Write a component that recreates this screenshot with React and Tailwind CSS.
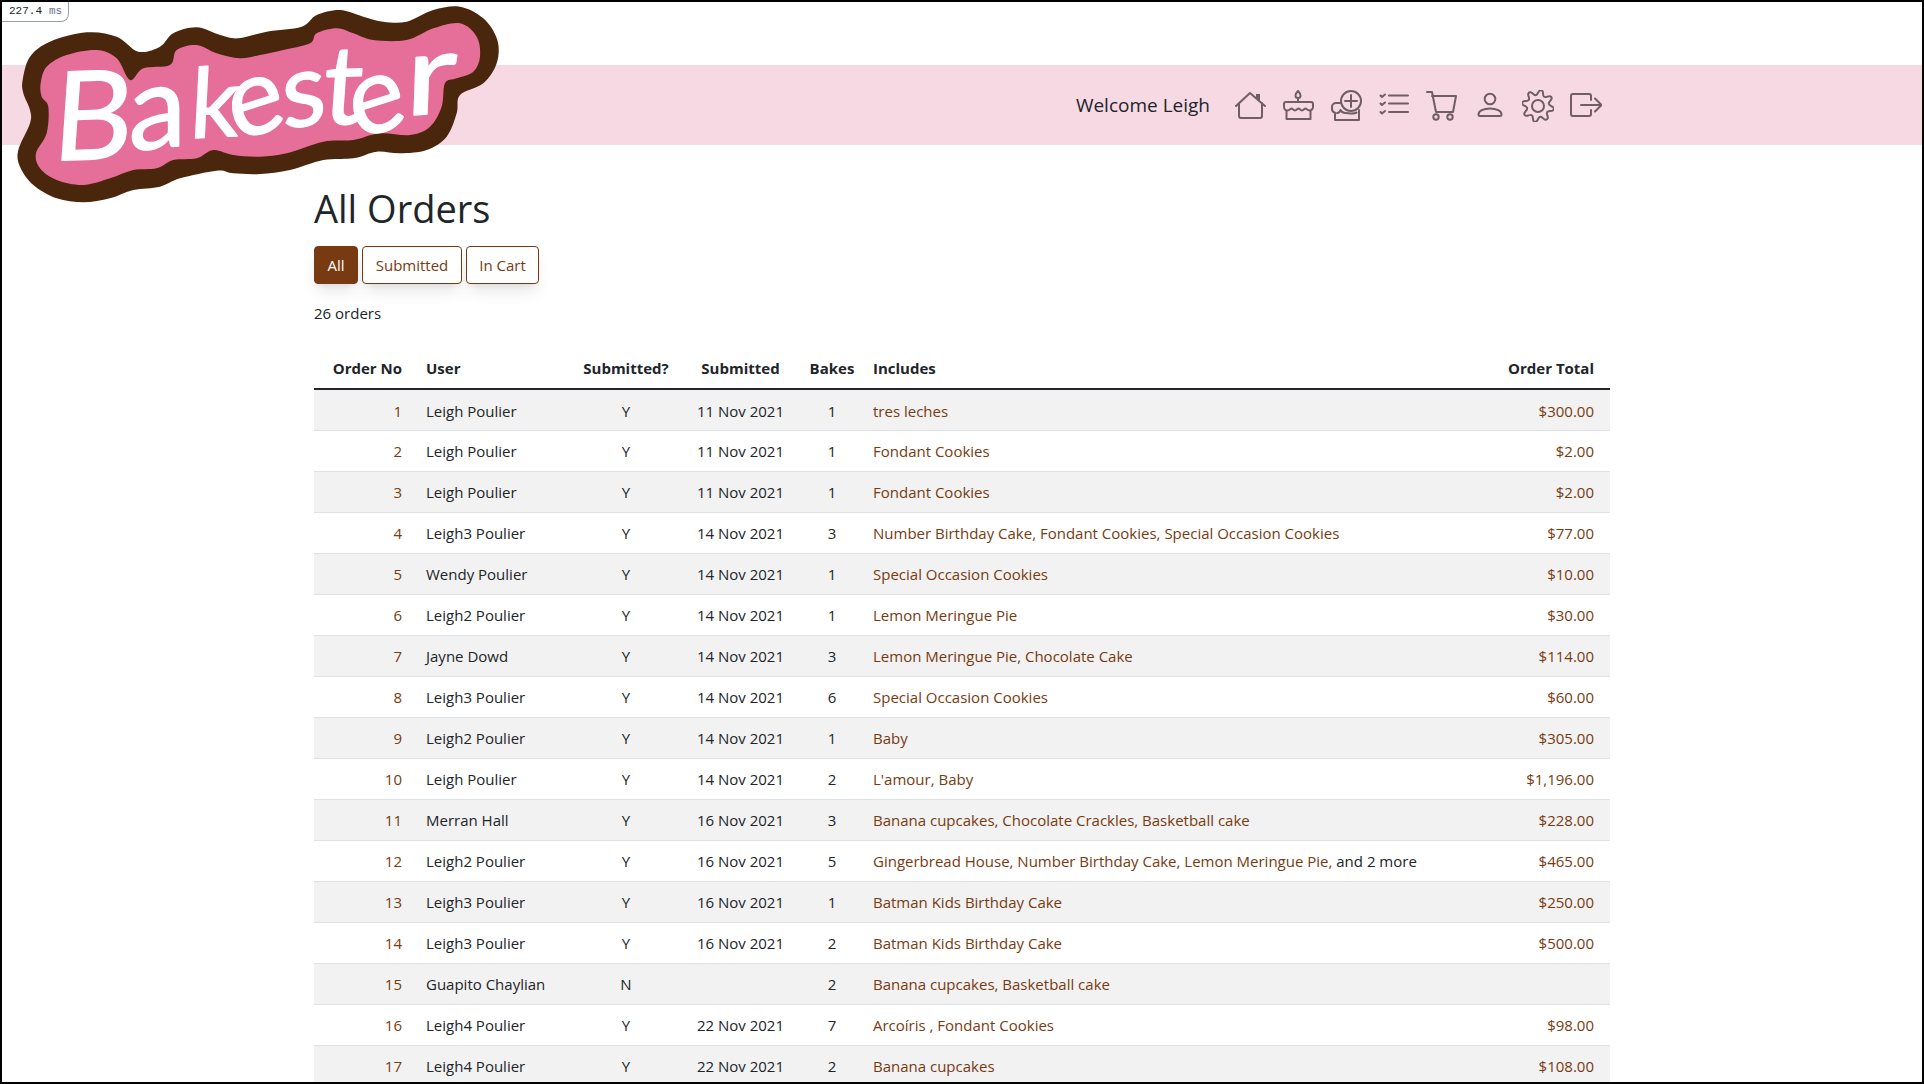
import React from "react";

const orders = [
  [1, "Leigh Poulier", "Y", "11 Nov 2021", 1, "tres leches", "$300.00"],
  [2, "Leigh Poulier", "Y", "11 Nov 2021", 1, "Fondant Cookies", "$2.00"],
  [3, "Leigh Poulier", "Y", "11 Nov 2021", 1, "Fondant Cookies", "$2.00"],
  [4, "Leigh3 Poulier", "Y", "14 Nov 2021", 3, "Number Birthday Cake, Fondant Cookies, Special Occasion Cookies", "$77.00"],
  [5, "Wendy Poulier", "Y", "14 Nov 2021", 1, "Special Occasion Cookies", "$10.00"],
  [6, "Leigh2 Poulier", "Y", "14 Nov 2021", 1, "Lemon Meringue Pie", "$30.00"],
  [7, "Jayne Dowd", "Y", "14 Nov 2021", 3, "Lemon Meringue Pie, Chocolate Cake", "$114.00"],
  [8, "Leigh3 Poulier", "Y", "14 Nov 2021", 6, "Special Occasion Cookies", "$60.00"],
  [9, "Leigh2 Poulier", "Y", "14 Nov 2021", 1, "Baby", "$305.00"],
  [10, "Leigh Poulier", "Y", "14 Nov 2021", 2, "L'amour, Baby", "$1,196.00"],
  [11, "Merran Hall", "Y", "16 Nov 2021", 3, "Banana cupcakes, Chocolate Crackles, Basketball cake", "$228.00"],
  [12, "Leigh2 Poulier", "Y", "16 Nov 2021", 5, "Gingerbread House, Number Birthday Cake, Lemon Meringue Pie,", "$465.00", " and 2 more"],
  [13, "Leigh3 Poulier", "Y", "16 Nov 2021", 1, "Batman Kids Birthday Cake", "$250.00"],
  [14, "Leigh3 Poulier", "Y", "16 Nov 2021", 2, "Batman Kids Birthday Cake", "$500.00"],
  [15, "Guapito Chaylian", "N", "", 2, "Banana cupcakes, Basketball cake", ""],
  [16, "Leigh4 Poulier", "Y", "22 Nov 2021", 7, "Arcoíris , Fondant Cookies", "$98.00"],
  [17, "Leigh4 Poulier", "Y", "22 Nov 2021", 2, "Banana cupcakes", "$108.00"],
];

// closed curve passing through the given points
const smooth = (pts) => {
  const n = pts.length;
  let d = `M${pts[0][0]} ${pts[0][1]}`;
  for (let i = 0; i < n; i++) {
    const p0 = pts[(i - 1 + n) % n];
    const p1 = pts[i];
    const p2 = pts[(i + 1) % n];
    const p3 = pts[(i + 2) % n];
    const c1 = [p1[0] + (p2[0] - p0[0]) / 6, p1[1] + (p2[1] - p0[1]) / 6];
    const c2 = [p2[0] - (p3[0] - p1[0]) / 6, p2[1] - (p3[1] - p1[1]) / 6];
    d += ` C${c1[0]} ${c1[1]} ${c2[0]} ${c2[1]} ${p2[0]} ${p2[1]}`;
  }
  return d + "Z";
};

const brownBlob = [[68,240],[90,170],[150,125],[260,97],[350,110],[415,155],[480,140],[520,100],[590,82],[660,105],[715,115],[800,95],[905,80],[950,45],[1020,30],[1090,50],[1150,65],[1220,65],[1300,30],[1380,20],[1450,55],[1492,120],[1490,190],[1450,250],[1380,285],[1370,340],[1340,410],[1280,450],[1200,460],[1130,455],[1060,475],[970,480],[870,510],[780,522],[700,520],[650,512],[540,535],[480,560],[400,570],[330,595],[250,607],[170,595],[100,555],[60,500],[55,450],[90,370],[90,330],[70,280]];
const pinkBlob = [[122,250],[140,200],[200,165],[290,150],[350,175],[390,240],[430,205],[510,195],[530,150],[590,135],[650,160],[720,175],[780,165],[850,150],[930,130],[950,100],[1010,85],[1060,100],[1120,120],[1220,120],[1300,85],[1380,70],[1430,110],[1440,170],[1420,215],[1370,235],[1335,250],[1325,320],[1290,380],[1230,405],[1140,400],[1060,420],[970,425],[860,460],[780,470],[700,465],[640,450],[590,475],[520,480],[470,505],[400,510],[330,535],[250,555],[170,540],[120,505],[108,460],[140,400],[145,320],[125,290]];

const letters = [
  ["B", 272, 478, 370, -2, 1],
  ["a", 472, 445, 350, -6, 1],
  ["k", 640, 412, 290, -3, 1],
  ["e", 785, 400, 320, -18, 1],
  ["s", 915, 378, 310, -8, 1],
  ["t", 1022, 372, 330, -2, 1],
  ["e", 1148, 395, 320, -18, 1],
  ["r", 1290, 342, 340, -4, 1.25],
];

const Logo = () => (
  <svg viewBox="0 0 1560 630" className="absolute -left-0.5 -top-0.5 h-[210px] w-[520px]">
    <path d={smooth(brownBlob)} fill="#4a260c" />
    <path d={smooth(pinkBlob)} fill="#e56f98" />
    {letters.map(([c, x, y, size, rot, sx], i) => (
      <text
        key={i}
        transform={`translate(${x} ${y}) rotate(${rot}) skewX(-6) scale(${sx} 1)`}
        textAnchor="middle"
        fontFamily="Lato, sans-serif"
        fontSize={size}
        fill="#fff"
        stroke="#fff"
        strokeWidth="4"
        strokeLinejoin="round"
      >
        {c}
      </text>
    ))}
  </svg>
);

const gearPts = Array.from({ length: 32 }, (_, i) => {
  const a = (i / 32) * Math.PI * 2 - Math.PI / 2;
  const r = [15.500, 15.500, 11.500, 11.500][i % 4];
  return [16 + r * Math.cos(a + 0.1), 16 + r * Math.sin(a + 0.1)];
});

const Icon = ({ children }) => (
  <svg viewBox="0 0 32 32" fill="none" stroke="#6f5e64" strokeWidth="2" strokeLinecap="round" strokeLinejoin="round" className="h-8 w-8 shrink-0">
    {children}
  </svg>
);

const icons = [
  <Icon key="home">
    <path d="M2 16 16 3l15 13M5 13v13a2 2 0 0 0 2 2h19a2 2 0 0 0 2-2V13" />
    <path d="M22 4h4v8l-4-4z" fill="#6f5e64" stroke="none" />
  </Icon>,
  <Icon key="cake">
    <path d="M16 1c-2 2-2.500 3-2.500 4.500a2.500 2.500 0 0 0 5 0C18.500 4 18 3 16 1zM16 8v4" />
    <path d="M4 12h25a2 2 0 0 1 2 2v3a3.500 3.500 0 0 1-3.500 3.500c-2 0-3-2-4-2s-2 2-3.500 2-2.500-2-3.500-2-2 2-3.500 2-2.500-2-3.500-2-2 2-4 2A3.500 3.500 0 0 1 2 17v-3a2 2 0 0 1 2-2z" />
    <path d="M4.500 21v8h24v-8" />
  </Icon>,
  <Icon key="add">
    <circle cx="21" cy="11" r="10" />
    <path d="M21 5v12M15 11h12" />
    <path d="M10 13H6a4 4 0 0 0-4 4v2a4 4 0 0 0 3 3.800V30h24V20" />
    <path d="M7 23c2 0 3-1 3.500-3 1 2 3 3 5 3s4 .5 6 .5 4 0 5-1" />
  </Icon>,
  <Icon key="list">
    <path d="M11 5.500h19M11 13.500h19M11 22h19M2.500 5.500l1.500 1.500 3-2.500M2.500 13.500l1.500 1.500 3-2.500M2.500 22l1.500 1.500 3-2.500" />
  </Icon>,
  <Icon key="cart">
    <path d="M1 2h5l4 20h17l3-16H6" />
    <circle cx="10" cy="27" r="2.700" />
    <circle cx="24" cy="27" r="2.700" />
  </Icon>,
  <Icon key="user">
    <circle cx="16" cy="9" r="5.300" />
    <path d="M6 26h20a1.500 1.500 0 0 0 1.500-1.500c0-3.500-5-6-11.500-6S4.500 21 4.500 24.500A1.500 1.500 0 0 0 6 26z" />
  </Icon>,
  <Icon key="cog">
    <path d={smooth(gearPts)} />
    <circle cx="16" cy="16" r="6" />
  </Icon>,
  <Icon key="out">
    <path d="M21 10V6a2 2 0 0 0-2-2H3a2 2 0 0 0-2 2v18a2 2 0 0 0 2 2h16a2 2 0 0 0 2-2v-4M11 15h20.500M25 8.500l6.500 6.500-6.500 6.500" />
  </Icon>,
];

const App = () => {
  return (
    <div className="relative h-[1084px] w-[1924px] overflow-hidden border-2 border-black bg-white font-['Open_Sans',sans-serif] text-[15px] text-[#212529]">
      <div className="mt-[63px] flex h-20 items-center justify-end bg-[#f7d9e4] pr-[320px]">
        <span className="mr-[24px] text-[19px]">Welcome Leigh</span>
        <div className="flex gap-4 pt-px">{icons}</div>
      </div>

      <Logo />

      <div className="absolute left-0 top-0 flex h-5 w-[67px] items-center rounded-br-lg border-b border-r border-gray-400 bg-white pl-[7px] font-['Liberation_Mono',monospace] text-[11px]">
        227.4<span className="ml-[7px] text-gray-500">ms</span>
      </div>

      <main className="ml-[312px] w-[1296px] pt-[38px]">
        <h1 className="text-[38px] leading-[50px]">All Orders</h1>
        <div className="mt-[13px] flex gap-1">
          <button className="h-[38px] w-[44px] rounded border border-[#783b11] bg-[#783b11] text-white shadow-lg">All</button>
          <button className="h-[38px] w-[100px] rounded border border-[#783b11] bg-white text-[#783b11] shadow-lg">Submitted</button>
          <button className="h-[38px] w-[73px] rounded border border-[#783b11] bg-white text-[#783b11] shadow-lg">In Cart</button>
        </div>
        <p className="mt-[18px] leading-[22px]">26 orders</p>

        <table className="mt-[24px] w-full table-fixed">
          <colgroup>
            <col className="w-[100px]" />
            <col className="w-[155px]" />
            <col className="w-[114px]" />
            <col className="w-[115px]" />
            <col className="w-[68px]" />
            <col />
            <col className="w-[140px]" />
          </colgroup>
          <thead>
            <tr className="h-[41px] border-b-2 border-[#212529] text-left font-bold [&>th]:pt-px">
              <th className="pr-3 text-right">Order No</th>
              <th className="pl-3">User</th>
              <th className="text-center">Submitted?</th>
              <th className="text-center">Submitted</th>
              <th className="text-center">Bakes</th>
              <th className="pl-[7px]">Includes</th>
              <th className="pr-4 text-right">Order Total</th>
            </tr>
          </thead>
          <tbody>
            {orders.map(([no, user, sub, date, bakes, items, total, more]) => (
              <tr key={no} className="h-[41px] border-b border-[#dee2e6] odd:bg-[#f2f2f2] [&>td]:pt-[2px]">
                <td className="pr-3 text-right text-[#783b11]">{no}</td>
                <td className="pl-3">{user}</td>
                <td className="text-center">{sub}</td>
                <td className="text-center">{date}</td>
                <td className="text-center">{bakes}</td>
                <td className="pl-[7px]">
                  <span className="text-[#783b11]">{items}</span>
                  {more}
                </td>
                <td className="pr-4 text-right text-[#783b11]">{total}</td>
              </tr>
            ))}
          </tbody>
        </table>
      </main>
    </div>
  );
};

export default App;
